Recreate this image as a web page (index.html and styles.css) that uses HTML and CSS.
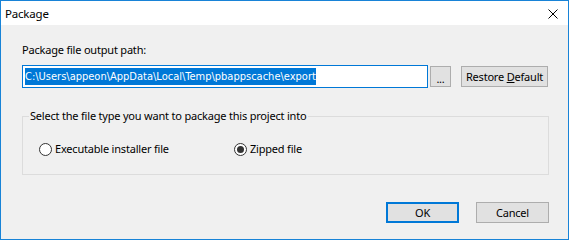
FILE: index.html
```html
<!DOCTYPE html>
<html>
<head>
<meta charset="UTF-8">
<title>Package</title>
<link rel="stylesheet" href="styles.css">
</head>
<body>

<div class="window">
    <div class="titlebar">
        <span class="title">Package</span>
        <svg class="close" width="10" height="10" viewBox="0 0 10 10">
            <path d="M0.5 0.5 L9.5 9.5 M9.5 0.5 L0.5 9.5" stroke="#000" stroke-width="1"/>
        </svg>
    </div>

    <div class="content">
        <div class="label">Package file output path:</div>
        <div class="path-row">
            <div class="path-input"><span class="selected">C:\Users\appeon\AppData\Local\Temp\pbappscache\export</span></div>
            <div class="button small">...</div>
            <div class="button restore"><span>Restore <u>D</u>efault</span></div>
        </div>

        <div class="group">
            <div class="legend">Select the file type you want to package this project into</div>
            <div class="radios">
                <div class="radio-item first">
                    <span class="radio"></span>
                    <span>Executable installer file</span>
                </div>
                <div class="radio-item">
                    <span class="radio checked"></span>
                    <span>Zipped file</span>
                </div>
            </div>
        </div>

        <div class="actions">
            <div class="button dialog default">OK</div>
            <div class="button dialog">Cancel</div>
        </div>
    </div>
</div>

</body>
</html>
```

FILE: styles.css
```css
body, html {
    margin: 0;
    padding: 0;
    font-family: "Noto Sans", Arial, sans-serif;
    font-size: 11px;
    letter-spacing: -0.2px;
    color: #000;
}

.window {
    width: 569px;
    height: 240px;
    box-sizing: border-box;
    border: 1px solid #1883d7;
    background-color: #f0f0f0;
}

.titlebar {
    height: 24px;
    background-color: #fff;
    display: flex;
    align-items: center;
    justify-content: space-between;
    padding: 0 10px 0 4px;
}

.title {
    font-size: 11.5px;
    line-height: 16px;
    padding-top: 2px;
}

.close {
    margin-top: 2px;
}

.content {
    padding: 17px 0 0 21px;
}

.label {
    line-height: 16px;
    height: 16px;
}

.path-row {
    display: flex;
    align-items: center;
    margin-top: 7px;
}

.path-input {
    width: 406px;
    height: 23px;
    box-sizing: border-box;
    border: 1px solid #0078d7;
    background-color: #fff;
    padding: 2px 0 0 2px;
    font-family: "DejaVu Sans Condensed", "Liberation Sans Narrow", sans-serif;
    font-size: 11px;
    letter-spacing: 0;
    line-height: 17px;
    white-space: nowrap;
    overflow: hidden;
}

.selected {
    background-color: #0078d7;
    color: #fff;
    display: inline-block;
    height: 17px;
}

.button {
    height: 21px;
    box-sizing: border-box;
    border: 1px solid #adadad;
    background-color: #e1e1e1;
    display: flex;
    align-items: center;
    justify-content: center;
    line-height: 16px;
}

.small {
    width: 21px;
    margin-left: 2px;
    padding-top: 4px;
}

.restore {
    width: 87px;
    margin-left: 10px;
}

.group {
    width: 527px;
    height: 59px;
    box-sizing: border-box;
    border: 1px solid #dcdcdc;
    margin-top: 28px;
    position: relative;
}

.legend {
    position: absolute;
    top: -9px;
    left: 6px;
    background-color: #f0f0f0;
    padding: 0 2px 0 1px;
    line-height: 16px;
}

.radios {
    display: flex;
    margin: 24px 0 0 16px;
}

.radio-item {
    display: flex;
    align-items: center;
    gap: 3px;
    line-height: 16px;
}

.radio-item.first {
    width: 195px;
}

.radio {
    width: 13px;
    height: 13px;
    box-sizing: border-box;
    border: 1px solid #333;
    border-radius: 50%;
    background-color: #fff;
    display: flex;
    align-items: center;
    justify-content: center;
}

.radio.checked::after {
    content: "";
    width: 7px;
    height: 7px;
    border-radius: 50%;
    background-color: #333;
}

.actions {
    display: flex;
    justify-content: flex-end;
    gap: 17px;
    margin: 27px 19px 0 0;
}

.dialog {
    width: 73px;
}

.default {
    border: 2px solid #0078d7;
}
```
